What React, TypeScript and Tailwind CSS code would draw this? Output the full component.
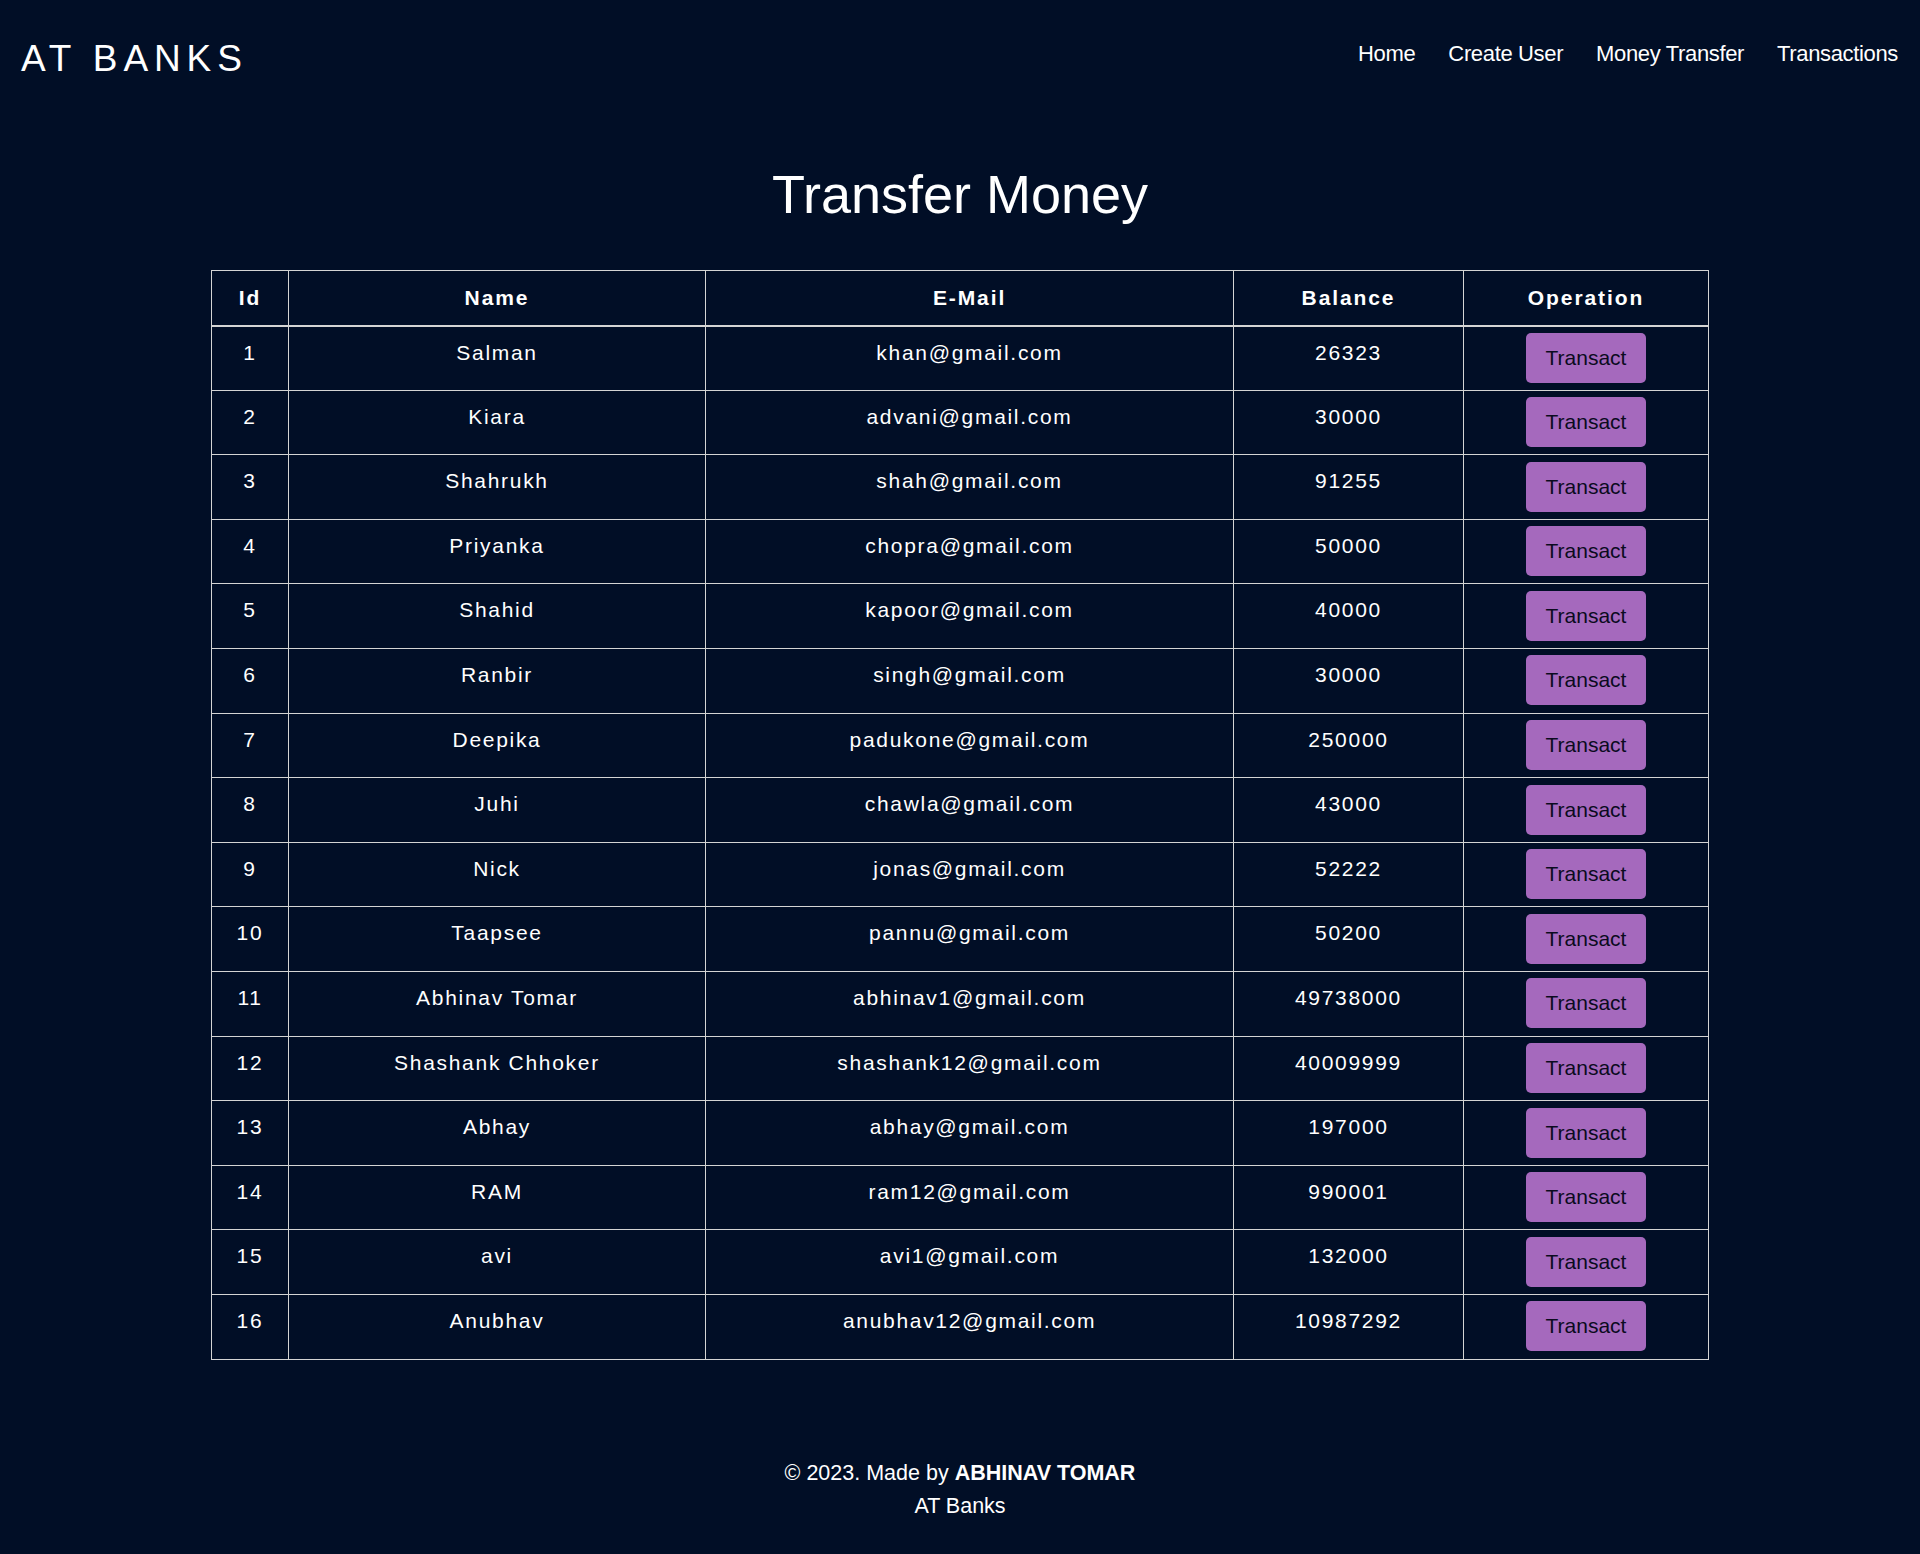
import React from 'react';

const USERS = [
  { id: 1, name: 'Salman', email: 'khan@gmail.com', balance: 26323 },
  { id: 2, name: 'Kiara', email: 'advani@gmail.com', balance: 30000 },
  { id: 3, name: 'Shahrukh', email: 'shah@gmail.com', balance: 91255 },
  { id: 4, name: 'Priyanka', email: 'chopra@gmail.com', balance: 50000 },
  { id: 5, name: 'Shahid', email: 'kapoor@gmail.com', balance: 40000 },
  { id: 6, name: 'Ranbir', email: 'singh@gmail.com', balance: 30000 },
  { id: 7, name: 'Deepika', email: 'padukone@gmail.com', balance: 250000 },
  { id: 8, name: 'Juhi', email: 'chawla@gmail.com', balance: 43000 },
  { id: 9, name: 'Nick', email: 'jonas@gmail.com', balance: 52222 },
  { id: 10, name: 'Taapsee', email: 'pannu@gmail.com', balance: 50200 },
  { id: 11, name: 'Abhinav Tomar', email: 'abhinav1@gmail.com', balance: 49738000 },
  { id: 12, name: 'Shashank Chhoker', email: 'shashank12@gmail.com', balance: 40009999 },
  { id: 13, name: 'Abhay', email: 'abhay@gmail.com', balance: 197000 },
  { id: 14, name: 'RAM', email: 'ram12@gmail.com', balance: 990001 },
  { id: 15, name: 'avi', email: 'avi1@gmail.com', balance: 132000 },
  { id: 16, name: 'Anubhav', email: 'anubhav12@gmail.com', balance: 10987292 },
];

const NAV = ['Home', 'Create User', 'Money Transfer', 'Transactions'];

const th = 'border border-[#d4d4d4] border-b-2 text-center align-middle text-[21px] font-bold tracking-[1.9px] leading-[30px]';
const td = 'border border-[#d4d4d4] text-center align-top pt-[11px] text-[21px] tracking-[1.7px] leading-[30px]';

export default function App() {
  return (
    <div className="min-h-[1554px] bg-[#010e26] text-white font-['Liberation_Sans',Arial,sans-serif] flex flex-col">
      <header className="flex items-start justify-between">
        <div className="pl-[21px] pt-[37px] text-[37px] leading-[44px] tracking-[5.9px]">AT BANKS</div>
        <nav className="flex gap-[33px] pr-[22px] pt-[41px] text-[22px] leading-[26px] tracking-[-0.35px]">
          {NAV.map(item => (
            <a key={item} href="#" className="hover:text-[#a569bd]">{item}</a>
          ))}
        </nav>
      </header>

      <h1 className="mt-[81px] text-center text-[54px] leading-[64px] font-normal">Transfer Money</h1>

      <table className="mx-auto mt-[44px] w-[1497px] table-fixed border-collapse">
        <colgroup>
          <col className="w-[77px]" />
          <col className="w-[417px]" />
          <col className="w-[528px]" />
          <col className="w-[230px]" />
          <col className="w-[245px]" />
        </colgroup>
        <thead>
          <tr className="h-[55px]">
            <th className={th}>Id</th>
            <th className={th}>Name</th>
            <th className={th}>E-Mail</th>
            <th className={th}>Balance</th>
            <th className={th}>Operation</th>
          </tr>
        </thead>
        <tbody>
          {USERS.map(u => (
            <tr key={u.id} className="h-[64.6px]">
              <td className={td}>{u.id}</td>
              <td className={td}>{u.name}</td>
              <td className={td}>{u.email}</td>
              <td className={td}>{u.balance}</td>
              <td className="border border-[#d4d4d4] text-center align-top pt-[6.5px]">
                <button className="h-[50px] px-[20px] rounded-[5px] bg-[#a569bd] text-[#0b0b1e] text-[21px] leading-[24px]">
                  Transact
                </button>
              </td>
            </tr>
          ))}
        </tbody>
      </table>

      <footer className="mt-[97px] text-center text-[21.5px] leading-[33px]">
        <p>
          © 2023. Made by <span className="font-bold">ABHINAV TOMAR</span>
        </p>
        <p>AT Banks</p>
      </footer>
    </div>
  );
}
